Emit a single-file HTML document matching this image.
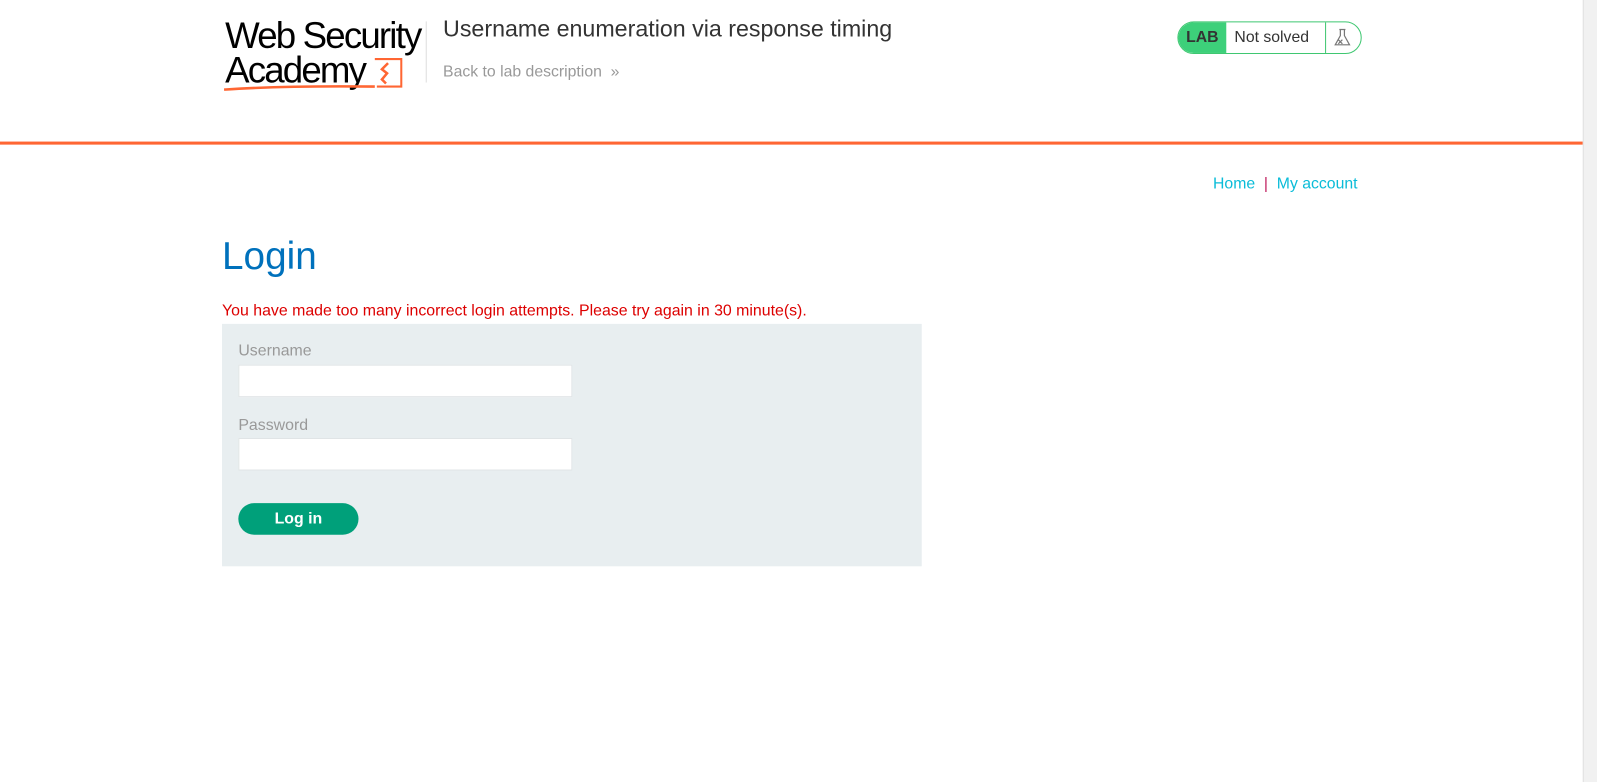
<!DOCTYPE html>
<html><head><meta charset="utf-8"><style>
body{margin:0;width:1597px;height:782px;background:#fff;font-family:"Liberation Sans",Arial,sans-serif;position:relative;overflow:hidden}
#w{position:absolute;left:0;top:0;width:1568px;height:768px;transform:scale(1.0185);transform-origin:0 0}
.a{position:absolute}
.sb{position:absolute;right:0;top:0;width:13px;height:768px;background:#f1f1f1;border-left:1px solid #e0e0e0}
.logo{left:221px;top:18px;font-size:36px;line-height:34px;color:#000;letter-spacing:-1.8px}
.inp{position:absolute;left:234px;width:326px;height:30px;background:#fff;border:1px solid #e0e4e6}
</style></head><body><div id="w">
<div class="a logo">Web Security<br>Academy</div>
<svg class="a" style="left:218px;top:54px" width="180" height="40"><path d="M150 4 H176 V31 H152" fill="none" stroke="#ff6633" stroke-width="2"/><path d="M163 8 l-6 6 l5 4 l-5 6 l4 4" fill="none" stroke="#ff6633" stroke-width="2.5"/><path d="M2 34 Q60 30 150 31" fill="none" stroke="#ff6633" stroke-width="2.5"/></svg>
<div class="a" style="left:418px;top:21px;width:1px;height:60px;background:#ddd"></div>
<div class="a" style="left:435px;top:15px;font-size:22.8px;color:#333">Username enumeration via response timing</div>
<div class="a" style="left:435px;top:62px;font-size:15.5px;color:#999">Back to lab description &nbsp;»</div>
<div class="a" style="left:1156px;top:21px;width:179px;height:30px;border:1px solid #3fc771;border-radius:16px;overflow:hidden">
<div class="a" style="left:0;top:0;width:47px;height:30px;background:#3dd07a;font-weight:bold;font-size:15.5px;line-height:30px;text-align:center;color:#333">LAB</div>
<div class="a" style="left:55px;top:0;font-size:15.5px;line-height:30px;color:#333">Not solved</div>
<div class="a" style="left:144px;top:0;width:1px;height:30px;background:#3fc771"></div>
<svg class="a" style="left:151px;top:5px" width="20" height="20"><path d="M7 2h6M8 2v6L3 17h14L12 8V2M6 12l4 4M10 12l-4 4" fill="none" stroke="#777" stroke-width="1.2"/></svg>
</div>
<div class="a" style="left:0;top:139px;width:1555px;height:3px;background:#ff6633"></div>
<div class="a" style="left:1191px;top:172px;font-size:15.5px;color:#0abcd8">Home <span style="color:#c02060">&nbsp;|&nbsp;</span> My account</div>
<div class="a" style="left:218px;top:231px;font-size:38px;color:#0071bc">Login</div>
<div class="a" style="left:218px;top:297px;font-size:15.6px;color:#d00">You have made too many incorrect login attempts. Please try again in 30 minute(s).</div>
<div class="a" style="left:218px;top:318px;width:687px;height:238px;background:#e8eef0"></div>
<div class="a" style="left:234px;top:336px;font-size:15.6px;color:#999">Username</div>
<div class="inp" style="top:358px"></div>
<div class="a" style="left:234px;top:409px;font-size:15.6px;color:#999">Password</div>
<div class="inp" style="top:430px"></div>
<div class="a" style="left:234px;top:494px;width:118px;height:31px;border-radius:16px;background:#00a07a;color:#fff;font-weight:bold;font-size:15.6px;line-height:31px;text-align:center">Log in</div>
<div class="sb"></div>
</div></body></html>
